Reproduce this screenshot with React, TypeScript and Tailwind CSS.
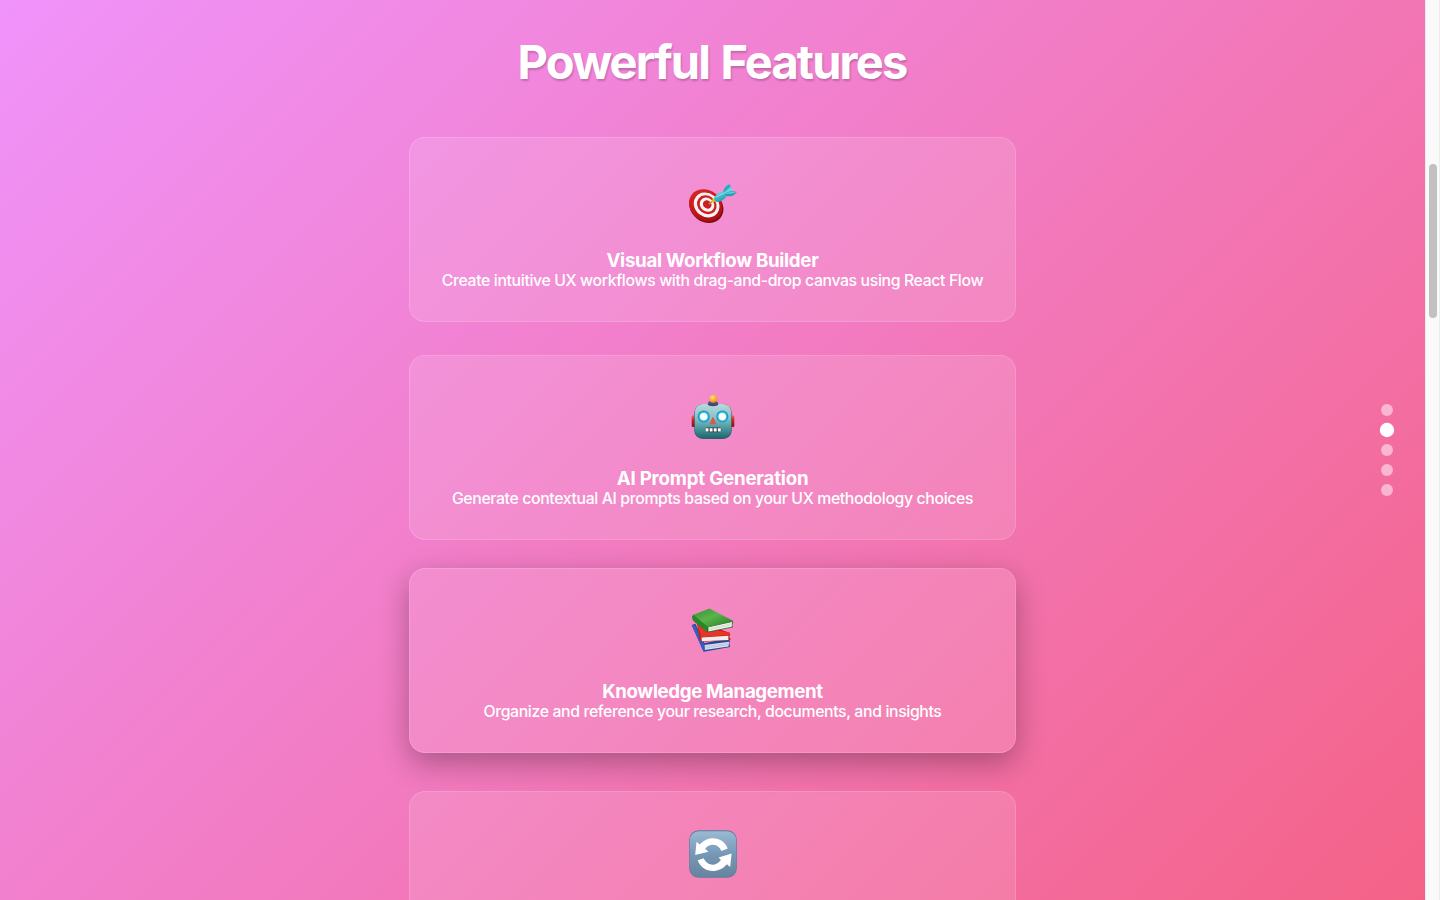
import React from "react";

function Target() {
  return (
    <svg width="48" height="48" viewBox="0 0.5 48 48" className="block">
      <defs>
        <linearGradient id="tRed" x1="0" y1="0" x2="1" y2="0.6">
          <stop offset="0" stopColor="#d42a28" />
          <stop offset="0.5" stopColor="#cf1a1d" />
          <stop offset="1" stopColor="#a80f14" />
        </linearGradient>
        <linearGradient id="tDart" x1="0" y1="0" x2="0.5" y2="1">
          <stop offset="0" stopColor="#6fe0ea" />
          <stop offset="1" stopColor="#1f9bb0" />
        </linearGradient>
      </defs>
      <ellipse cx="17.400" cy="31.200" rx="18" ry="15.300" transform="rotate(38 17.4 31.2)" fill="#7c0a0e" />
      <ellipse cx="16.700" cy="29.800" rx="17.600" ry="15.200" transform="rotate(38 16.7 29.8)" fill="url(#tRed)" />
      <ellipse cx="17.600" cy="29.500" rx="13.500" ry="11.700" transform="rotate(38 17.6 29.5)" fill="#fbf3f2" />
      <ellipse cx="17.800" cy="29.300" rx="10.300" ry="8.900" transform="rotate(38 17.8 29.3)" fill="#cb2024" />
      <ellipse cx="18" cy="29.200" rx="7.700" ry="6.700" transform="rotate(38 18 29.2)" fill="#fbf3f2" />
      <ellipse cx="18.200" cy="29" rx="4.500" ry="3.900" transform="rotate(38 18.2 29)" fill="#c91f25" />
      <path d="M19.800 28.600 24 25.300" stroke="#c98a1b" strokeWidth="1.500" />
      <path d="m22.600 26.800 1.200-4.600 4 3.800Z" fill="#f3b719" />
      <path d="M25 22.800c1.200-3.500 5-6.100 10.800-7l3 2.100c-1.400 4.500-5.300 7.900-11 8.700-1.800-.6-2.700-1.900-2.800-3.800Z" fill="url(#tDart)" />
      <path d="M34.300 17.200c-.1-4 2.400-7 6.700-8.400.8 2 .6 3.900-.5 5.800Z" fill="#2fa9bd" />
      <path d="m35 17 6.200-5.300c2 1 2.500 2 1.900 3.100l-5.600 3.500Z" fill="#64d8e2" />
      <path d="M37 17.400c3.500-1.900 7-2 10.800-.8-2.400 3.600-6.200 5.200-10.600 3.700L36 19Z" fill="#2d9bac" />
      <path d="m36.500 17.900 4.200-1.500c2.600-.4 4.900-.3 7 .2-3 1.500-6.400 2.100-10.400 1.900Z" fill="#5bcbd6" />
      <path d="m27 21.500 8.500-4.200" stroke="#a0f3f4" strokeWidth="1.200" opacity=".6" />
    </svg>
  );
}

function Robot() {
  return (
    <svg width="48" height="48" viewBox="0 1 48 48" className="block">
      <defs>
        <linearGradient id="rHead" x1="0" y1="0" x2="0" y2="1">
          <stop offset="0" stopColor="#b8d9dd" />
          <stop offset="0.4" stopColor="#8fc0c6" />
          <stop offset="0.75" stopColor="#439299" />
          <stop offset="1" stopColor="#22666d" />
        </linearGradient>
        <linearGradient id="rEar" x1="0" y1="0" x2="0" y2="1">
          <stop offset="0" stopColor="#f06a58" />
          <stop offset="0.4" stopColor="#c5262a" />
          <stop offset="1" stopColor="#7c1019" />
        </linearGradient>
        <radialGradient id="rBulb" cx=".4" cy=".3" r=".7">
          <stop offset="0" stopColor="#ffe36a" />
          <stop offset="1" stopColor="#ef910b" />
        </radialGradient>
      </defs>
      <rect x="2.700" y="22.200" width="5" height="11.800" rx="1.500" fill="url(#rEar)" />
      <rect x="40.300" y="22.200" width="5" height="11.800" rx="1.500" fill="url(#rEar)" />
      <path d="M19 10c.5-3.1 9.500-3.100 10 0v3.200H19Z" fill="#4b4c8b" />
      <circle cx="24.300" cy="5.800" r="3.900" fill="url(#rBulb)" />
      <rect x="5.300" y="10.900" width="37.400" height="35" rx="8.500" fill="#28646b" />
      <rect x="5.800" y="10.900" width="36.400" height="34" rx="8.200" fill="url(#rHead)" />
      <path d="M18.500 11h11c-.6 3-10.400 3-11 0Z" fill="#404778" />
      <circle cx="14.700" cy="23.600" r="6" fill="#0e9fc5" />
      <circle cx="14.700" cy="23.600" r="4.800" fill="#43c5e5" />
      <circle cx="14.700" cy="23.600" r="3.700" fill="#fff" />
      <circle cx="33.300" cy="23.600" r="6" fill="#0e9fc5" />
      <circle cx="33.300" cy="23.600" r="4.800" fill="#43c5e5" />
      <circle cx="33.300" cy="23.600" r="3.700" fill="#fff" />
      <path d="m24 24.500 2.700 6.300h-5.400Z" fill="#d95749" stroke="#d95749" strokeLinejoin="round" />
      <rect x="15.800" y="34.500" width="16.600" height="4.800" rx="2.200" fill="#284347" />
      <path d="M18 35.200v3.400m4.100-3.400v3.400m4.100-3.400v3.400m4.100-3.400v3.400" stroke="#fff" strokeWidth="2.900" />
    </svg>
  );
}

function Books() {
  return (
    <svg width="48" height="48" viewBox="0.6 0.3 48 48" className="block">
      <defs>
        <linearGradient id="bGreen" x1="0" y1="0" x2="1" y2="1">
          <stop offset="0" stopColor="#2f9230" />
          <stop offset="0.45" stopColor="#5bb34a" />
          <stop offset="1" stopColor="#267a25" />
        </linearGradient>
      </defs>
      <path d="M3.300 18.200 7 17l9 19.500 23-5 2.700 2.800-.9 1.800.9 4.200-26.500 4.800Z" fill="#21489f" />
      <path d="m16 38.400 24.600-3.300-.4 4.600-24 3.500Z" fill="#dce1ec" />
      <path d="m16.500 40 24-3.400m-24 4.900 23.700-3.400" stroke="#aab1c5" strokeWidth=".6" />
      <path d="m3.300 18.200 11.900 26.700 1.200-1.800-.4-4.700L7 19Z" fill="#355dbf" />
      <path d="m8.600 17.300 2-1.700L41.300 26l.6 2-1 1.600 1.400 3.700-29 1.800-2-2.800Z" fill="#c61f18" />
      <path d="M13 30.900 40 29v4.200l-26.500 1.400Z" fill="#f1eeee" />
      <path d="m8.600 17.300 4.400 13.300L41.500 28l-.2-2L20 22Z" fill="#e93428" />
      <path d="M5 8 3.900 9.700l1.400 4.700 14 11.300 25.500-5.200-1-1.800 1-4Z" fill="#216f24" />
      <path d="m20 20.500 23.600-5.300-.3 4.900-23.300 4.800Z" fill="#f5f4f0" />
      <path d="m20.500 22 22.500-5m-22.500 6.300L43 18.400" stroke="#bbbdb9" strokeWidth=".5" />
      <path d="M4.700 8.300 21 1.800l24.200 12.500-25.700 6.200Z" fill="url(#bGreen)" />
      <path d="M4.700 8.300c-1.400 2-1 4.200.6 6.100l14 11.300c-1-1.700-.9-3.500.2-5.200Z" fill="#28872a" />
    </svg>
  );
}

function Cycle() {
  return (
    <svg width="48" height="48" viewBox="0 0 48 48" className="block">
      <defs>
        <linearGradient id="cBg" x1="0" y1="0" x2="0" y2="1">
          <stop offset="0" stopColor="#9bb9d2" />
          <stop offset="0.5" stopColor="#7798b5" />
          <stop offset="1" stopColor="#65849e" />
        </linearGradient>
      </defs>
      <rect x=".2" y=".2" width="47.600" height="47.600" rx="9.500" fill="#587c9f" />
      <rect x=".9" y="1.200" width="46.200" height="45.800" rx="8.800" fill="url(#cBg)" />
      <path d="M7.500 11.700 10.700 14.400C19.500 5 34.200 6.700 38.700 18.600l-6.200 2.300C29.200 13.500 20.500 13 16.100 18.800l3.300 2.900L6.200 24.900Z" fill="#fff" />
      <path d="m42.600 23.500-1.400 13.400-3.300-2.700C29 44.800 13.200 42.600 8.700 30.300l6-2C18.200 36 26.900 36.900 31.900 29.900l-2.300-2.500Z" fill="#fff" />
    </svg>
  );
}

type Feature = {
  icon: React.ReactNode;
  title?: string;
  text?: string;
  titleSpacing?: string;
  raised?: boolean;
};

const features: Feature[] = [
  { icon: <Target />, title: "Visual Workflow Builder", text: "Create intuitive UX workflows with drag-and-drop canvas using React Flow", titleSpacing: "tracking-[-0.3px]" },
  { icon: <Robot />, title: "AI Prompt Generation", text: "Generate contextual AI prompts based on your UX methodology choices", titleSpacing: "tracking-[-0.2px]" },
  { icon: <Books />, title: "Knowledge Management", text: "Organize and reference your research, documents, and insights", titleSpacing: "tracking-[-0.37px]", raised: true },
  { icon: <Cycle /> },
];

export default function App() {
  return (
    <div className="flex h-[900px] w-[1440px] overflow-hidden font-['Inter','Liberation_Sans',sans-serif] text-white">
      <main className="relative h-[900px] w-[1425px] shrink-0 overflow-hidden bg-[linear-gradient(135deg,#f093fb_0%,#f5576c_100%)] bg-[length:1425px_1445px]">
        <h2 className="mt-[33px] h-[58px] pr-[1px] text-center text-[47px] leading-[58px] font-bold tracking-[-1.850px] [word-spacing:2px] [text-shadow:1px_2px_2px_rgba(0,0,0,0.2)]">Powerful Features</h2>
        <div className="mt-[46px] flex flex-col items-center gap-[33px]">
          {features.map((f, i) => (
            <article
              key={i}
              className={
                "flex h-[185px] w-[607px] shrink-0 flex-col items-center rounded-2xl border border-white/15 bg-white/12 px-8 pt-[38px] text-center " +
                (f.raised ? "-mt-[5px] mb-[5px] shadow-[0_10px_30px_rgba(0,0,0,0.3)]" : "")
              }
            >
              {f.icon}
              {f.title && (
                <h3 className={"mt-[26px] text-[18.720px] leading-[22px] font-bold whitespace-nowrap " + f.titleSpacing}>{f.title}</h3>
              )}
              {f.text && (
                <p className="-mt-px text-[15.800px] leading-5 [font-weight:450] tracking-[-0.36px] whitespace-nowrap">{f.text}</p>
              )}
            </article>
          ))}
        </div>
        <nav className="absolute top-[404px] right-[32px] flex flex-col items-center gap-2">
          <span className="size-3 rounded-full bg-white/50" />
          <span className="size-3 scale-120 rounded-full bg-white" />
          <span className="size-3 rounded-full bg-white/50" />
          <span className="size-3 rounded-full bg-white/50" />
          <span className="size-3 rounded-full bg-white/50" />
        </nav>
      </main>
      <aside className="h-[900px] w-[15px] border-r border-l border-[#ededed] bg-[#fafafa] pt-[164px] pl-[3px]">
        <div className="h-[154px] w-2 rounded-full bg-[#c1c1c1]" />
      </aside>
    </div>
  );
}
